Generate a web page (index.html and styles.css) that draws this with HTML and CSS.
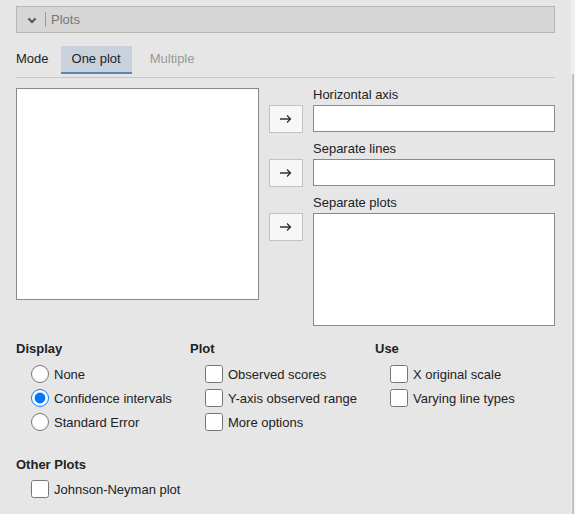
FILE: index.html
```html
<!DOCTYPE html>
<html>
<head>
<meta charset="utf-8">
<link rel="stylesheet" href="styles.css">
</head>
<body>
<div class="main">
  <div class="panel-head">
    <svg class="chev" width="10" height="7" viewBox="0 0 10 7"><path d="M1.5 1.5 L5 5 L8.5 1.5" fill="none" stroke="#555" stroke-width="2"/></svg>
    <span class="sep"></span>
    <span class="panel-title">Plots</span>
  </div>

  <div class="mode">
    <span class="mode-label">Mode</span>
    <div class="tab active">One plot</div>
    <div class="tab">Multiple</div>
  </div>

  <div class="vars">
    <div class="source"></div>
    <div class="targets">
      <div class="target">
        <div class="arrow-btn"><svg width="12" height="10" viewBox="0 0 12 10"><path d="M0 5 H11 M7 1.5 L10.5 5 L7 8.5" fill="none" stroke="#333" stroke-width="1.3"/></svg></div>
        <div class="field"><label>Horizontal axis</label><div class="box"></div></div>
      </div>
      <div class="target">
        <div class="arrow-btn"><svg width="12" height="10" viewBox="0 0 12 10"><path d="M0 5 H11 M7 1.5 L10.5 5 L7 8.5" fill="none" stroke="#333" stroke-width="1.3"/></svg></div>
        <div class="field"><label>Separate lines</label><div class="box"></div></div>
      </div>
      <div class="target">
        <div class="arrow-btn"><svg width="12" height="10" viewBox="0 0 12 10"><path d="M0 5 H11 M7 1.5 L10.5 5 L7 8.5" fill="none" stroke="#333" stroke-width="1.3"/></svg></div>
        <div class="field"><label>Separate plots</label><div class="box tall"></div></div>
      </div>
    </div>
  </div>

  <div class="options">
    <div class="col display-col">
      <h3>Display</h3>
      <label class="opt"><input type="radio" name="disp">None</label>
      <label class="opt"><input type="radio" name="disp" checked>Confidence intervals</label>
      <label class="opt"><input type="radio" name="disp">Standard Error</label>
    </div>
    <div class="col plot-col">
      <h3>Plot</h3>
      <label class="opt"><input type="checkbox">Observed scores</label>
      <label class="opt"><input type="checkbox">Y-axis observed range</label>
      <label class="opt"><input type="checkbox">More options</label>
    </div>
    <div class="col use-col">
      <h3>Use</h3>
      <label class="opt"><input type="checkbox">X original scale</label>
      <label class="opt"><input type="checkbox">Varying line types</label>
    </div>
  </div>

  <div class="other">
    <h3>Other Plots</h3>
    <label class="opt"><input type="checkbox">Johnson-Neyman plot</label>
  </div>
</div>
<div class="edge">
  <div class="edge-top"></div>
  <div class="edge-bottom"><div class="edge-bar"></div></div>
</div>
</body>
</html>
```
FILE: styles.css
```css
html, body {
  margin: 0;
  height: 514px;
  overflow: hidden;
}
body {
  background: #e6e6e6;
  font-family: "Liberation Sans", Arial, sans-serif;
  font-size: 13px;
  color: #333;
  display: flex;
}
.main {
  width: 571px;
  box-sizing: border-box;
  padding: 6px 16px 0 16px;
}
.panel-head {
  height: 27px;
  box-sizing: border-box;
  border: 1px solid #b6b6b6;
  background: #d6d6d6;
  display: flex;
  align-items: center;
  padding-left: 10px;
}
.chev {
  display: block;
  margin-top: 1px;
}
.sep {
  width: 1px;
  height: 15px;
  background: #9a9a9a;
  margin-left: 8px;
}
.panel-title {
  margin-left: 5px;
  color: #777;
}
.mode {
  display: flex;
  align-items: center;
  margin-top: 13px;
  padding-bottom: 3px;
  border-bottom: 1px solid #c6c6c6;
}
.mode-label {
  margin-right: 12px;
  margin-bottom: 3px;
  color: #222;
}
.tab {
  height: 28px;
  box-sizing: border-box;
  padding: 0 11px 2px;
  display: flex;
  align-items: center;
  border-bottom: 2px solid transparent;
  color: #999;
  margin-right: 7px;
}
.tab.active {
  background: #c9d2dc;
  border-bottom-color: #5a86b5;
  color: #222;
}
.vars {
  display: flex;
  gap: 10px;
  margin-top: 10px;
}
.source {
  width: 243px;
  height: 212px;
  box-sizing: border-box;
  border: 1px solid #8a8a8a;
  background: #fff;
}
.targets {
  flex: 1;
  display: flex;
  flex-direction: column;
  gap: 9px;
}
.target {
  display: flex;
  gap: 10px;
}
.arrow-btn {
  width: 34px;
  height: 28px;
  margin-top: 17px;
  box-sizing: border-box;
  border: 1px solid #c3c3c3;
  background: #f7f7f7;
  display: flex;
  align-items: center;
  justify-content: center;
}
.arrow-btn svg {
  display: block;
}
.field {
  flex: 1;
  display: flex;
  flex-direction: column;
}
.field label {
  line-height: 14px;
  height: 14px;
  margin: 0 0 3px;
  color: #222;
}
.box {
  height: 27px;
  box-sizing: border-box;
  border: 1px solid #8a8a8a;
  background: #fff;
}
.box.tall {
  height: 113px;
}
.options {
  display: grid;
  grid-template-columns: 174px 185px 1fr;
  margin-top: 15px;
}
h3 {
  font-size: 13px;
  font-weight: bold;
  line-height: 15px;
  margin: 0 0 6px;
  color: #222;
}
.opt {
  display: flex;
  align-items: center;
  height: 24px;
  padding-left: 15px;
  color: #222;
}
.opt input {
  width: 18px;
  height: 18px;
  margin: 0 5px 0 0;
}
.other {
  margin-top: 23px;
}
.other h3 {
  margin-bottom: 5px;
}
.edge {
  width: 4px;
  display: flex;
  flex-direction: column;
}
.edge-top {
  height: 74px;
  background: #f0f0f0;
}
.edge-bottom {
  flex: 1;
  background: #f0f0f0;
  padding: 0 1px;
  display: flex;
}
.edge-bar {
  flex: 1;
  background: #c2c2c2;
}
```
